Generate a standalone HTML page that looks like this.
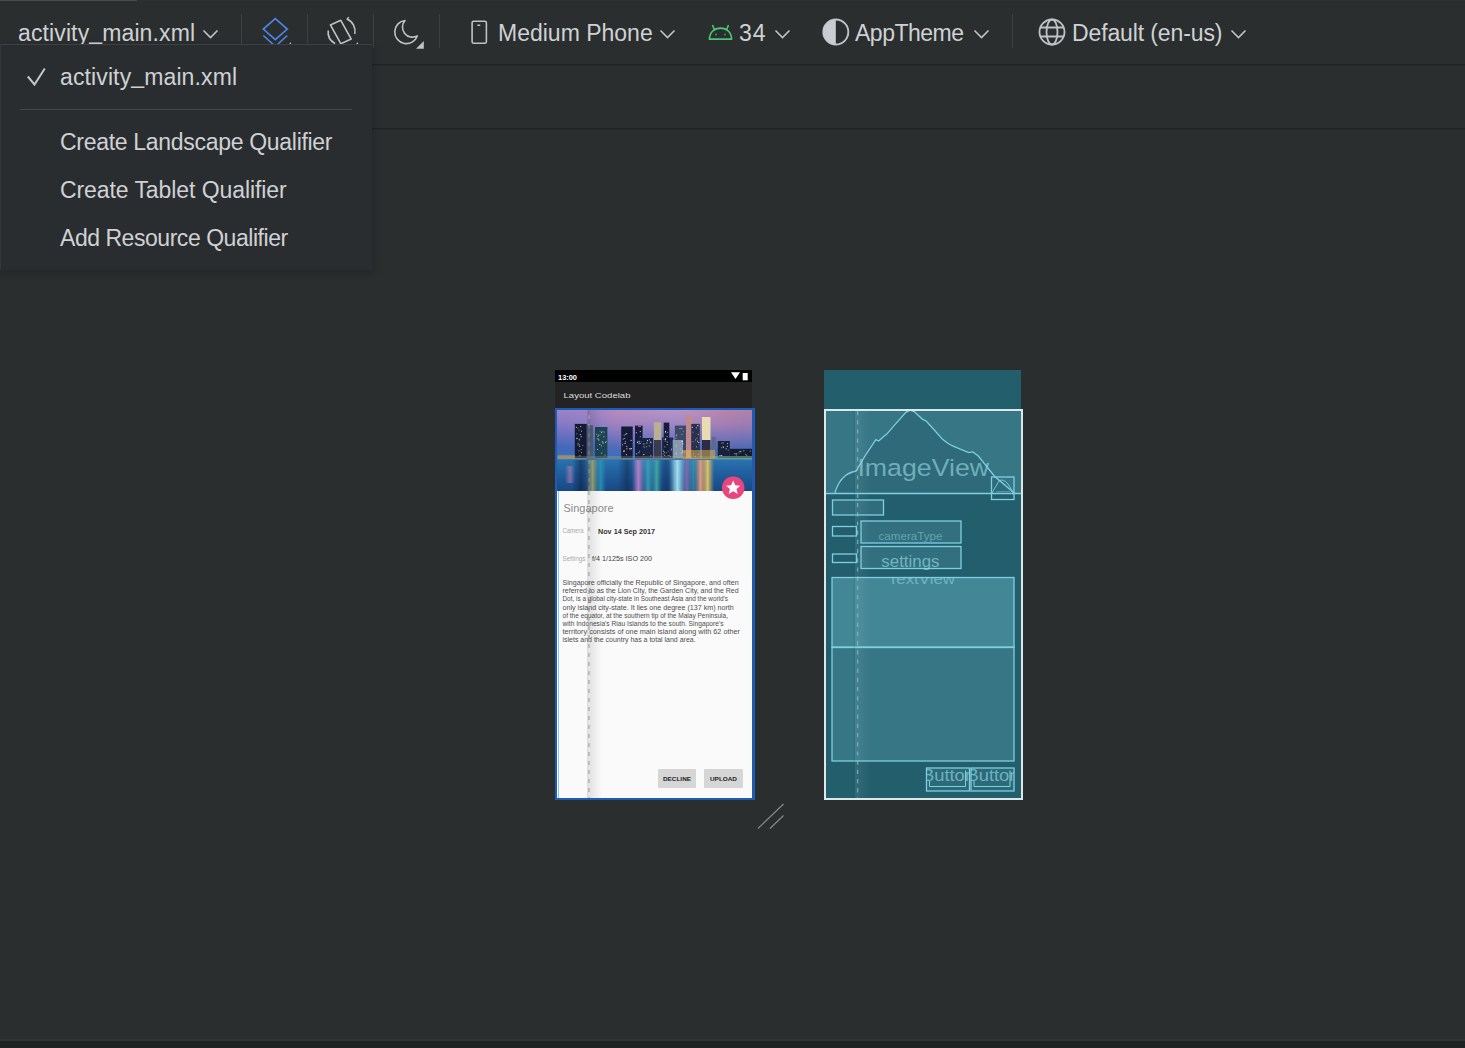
<!DOCTYPE html>
<html><head><meta charset="utf-8">
<style>
html,body{margin:0;padding:0;}
body{width:1465px;height:1048px;overflow:hidden;position:relative;background:#2a2e2f;font-family:"Liberation Sans",sans-serif;}
.a{position:absolute;}
.t{position:absolute;white-space:nowrap;color:#cfd1d4;font-size:23px;line-height:1;}
.sep{position:absolute;top:14px;width:1px;height:34px;background:#3e4144;}
.chev{position:absolute;}
</style></head><body>
<!-- toolbar -->
<div class="a" style="left:0;top:0;width:137px;height:1px;background:#484b4e"></div>
<div class="a" style="left:137px;top:0;width:1328px;height:1px;background:#2d3032"></div>
<div class="a" style="left:0;top:64px;width:1465px;height:1px;background:#1f2323"></div>
<div class="a" style="left:0;top:65px;width:1465px;height:1px;background:#252929"></div>
<div class="a" style="left:0;top:128px;width:1465px;height:1px;background:#1f2323"></div>
<div class="a" style="left:0;top:129px;width:1465px;height:1px;background:#252929"></div>
<div class="a" style="left:0;top:1039px;width:1465px;height:2px;background:#2f3434"></div>
<div class="a" style="left:0;top:1041px;width:1465px;height:7px;background:#1e2222"></div>

<div class="t" id="tb1" style="left:18px;top:22px;letter-spacing:0.12px">activity<span style="position:relative;top:-2px">_</span>main.xml</div>
<svg class="chev" style="left:202px;top:29px" width="17" height="11"><path d="M1.5 1.5 L8.5 8.5 L15.5 1.5" fill="none" stroke="#c0c3c6" stroke-width="1.6"/></svg>
<div class="sep" style="left:241px"></div>
<div class="sep" style="left:307px"></div>
<div class="sep" style="left:373px"></div>
<div class="sep" style="left:439px"></div>
<div class="sep" style="left:1012px"></div>

<!-- layers icon -->
<svg class="a" style="left:258px;top:14px" width="36" height="34">
 <path d="M17.3 4.6 L29.3 15.1 L17.3 25.6 L5.3 15.1 Z" fill="none" stroke="#4f84ec" stroke-width="1.6"/>
 <path d="M5.3 21.5 L17.3 32.3 L29.3 21.5" fill="none" stroke="#4f84ec" stroke-width="1.6"/>
 <path d="M33 28 L33 34 L27 34 Z" fill="#c0c3c6"/>
</svg>
<!-- rotate icon -->
<svg class="a" style="left:323px;top:14px" width="40" height="34">
 <path d="M7.4 10.9 L17.8 6.3 L28.2 25.1 L17.8 29.7 Z" fill="none" stroke="#c0c3c6" stroke-width="1.6" stroke-linejoin="round"/>
 <path d="M5.2 16.5 A13.2 13.2 0 0 0 12 29.5" fill="none" stroke="#c0c3c6" stroke-width="1.6"/>
 <path d="M23.8 5 A13.2 13.2 0 0 1 31.8 20" fill="none" stroke="#c0c3c6" stroke-width="1.6"/>
 <path d="M23.8 5 L26 3.2 M12 29.5 L10.5 31" fill="none" stroke="#c0c3c6" stroke-width="1.4"/>
 <path d="M35 28 L35 34 L29 34 Z" fill="#c0c3c6"/>
</svg>
<!-- moon icon -->
<svg class="a" style="left:390px;top:14px" width="40" height="36">
 <path d="M15 6.5 A11.6 11.6 0 1 0 27.3 21.9 A10 10 0 0 1 15 6.5 Z" fill="none" stroke="#c0c3c6" stroke-width="1.6" stroke-linejoin="round"/>
 <path d="M33.8 27 L33.8 34.8 L26 34.8 Z" fill="#c0c3c6"/>
</svg>
<!-- phone icon -->
<svg class="a" style="left:468px;top:17px" width="24" height="30">
 <rect x="4.1" y="4.3" width="14.3" height="22" rx="1.6" fill="none" stroke="#bfc2c5" stroke-width="1.6"/>
 <rect x="9.2" y="7.4" width="3.2" height="1.5" rx="0.6" fill="#c0c3c6"/>
</svg>
<div class="t" id="tb2" style="left:498px;top:22px;letter-spacing:0px">Medium Phone</div>
<svg class="chev" style="left:659px;top:29px" width="17" height="11"><path d="M1.5 1.5 L8.5 8.5 L15.5 1.5" fill="none" stroke="#c0c3c6" stroke-width="1.6"/></svg>
<!-- android -->
<svg class="a" style="left:705px;top:20px" width="30" height="24">
 <path d="M4.5 19.2 C4.5 12 9.5 8.2 15.5 8.2 C21.5 8.2 26.5 12 26.5 19.2 Z" fill="none" stroke="#4dc673" stroke-width="1.7" stroke-linejoin="round"/>
 <path d="M9.5 10 L7.5 5 M21.5 10 L23.5 5" stroke="#4dc673" stroke-width="1.6"/>
 <circle cx="11" cy="14.5" r="0.9" fill="#4dc673" opacity="0.7"/><circle cx="20" cy="14.5" r="0.9" fill="#4dc673" opacity="0.7"/>
</svg>
<div class="t" id="tb3" style="left:739px;top:22px;letter-spacing:1px">34</div>
<svg class="chev" style="left:774px;top:29px" width="17" height="11"><path d="M1.5 1.5 L8.5 8.5 L15.5 1.5" fill="none" stroke="#c0c3c6" stroke-width="1.6"/></svg>
<!-- half circle -->
<svg class="a" style="left:820px;top:16px" width="32" height="32">
 <circle cx="15.8" cy="16" r="12.5" fill="none" stroke="#c0c3c6" stroke-width="1.9"/>
 <path d="M15.8 3.5 A12.5 12.5 0 0 0 15.8 28.5 Z" fill="#c9ccd0"/>
</svg>
<div class="t" id="tb4" style="left:855px;top:22px;letter-spacing:-0.5px">AppTheme</div>
<svg class="chev" style="left:973px;top:29px" width="17" height="11"><path d="M1.5 1.5 L8.5 8.5 L15.5 1.5" fill="none" stroke="#c0c3c6" stroke-width="1.6"/></svg>
<!-- globe -->
<svg class="a" style="left:1036px;top:16px" width="32" height="32">
 <circle cx="16" cy="16" r="12.5" fill="none" stroke="#c0c3c6" stroke-width="1.8"/>
 <ellipse cx="16" cy="16" rx="5.5" ry="12.5" fill="none" stroke="#c0c3c6" stroke-width="1.8"/>
 <path d="M4 11.5 H28 M4 20.5 H28" stroke="#c0c3c6" stroke-width="1.8"/>
</svg>
<div class="t" id="tb5" style="left:1072px;top:22px;letter-spacing:-0.12px">Default (en-us)</div>
<svg class="chev" style="left:1230px;top:29px" width="17" height="11"><path d="M1.5 1.5 L8.5 8.5 L15.5 1.5" fill="none" stroke="#c0c3c6" stroke-width="1.6"/></svg>

<!-- POPUP -->
<div class="a" style="left:0;top:44px;width:372px;height:226px;background:#2a2d2f;border-top:1px solid #3e4144;border-left:1px solid #34373a;box-sizing:border-box;box-shadow:1px 3px 7px 1px rgba(0,0,0,0.16);">
</div>
<svg class="a" style="left:24px;top:64px" width="26" height="26"><path d="M3.8 12.5 L10.5 20.5 L20.8 4.5" fill="none" stroke="#c4c7ca" stroke-width="2"/></svg>
<div class="t" id="pp1" style="left:60px;top:65.5px;letter-spacing:0.12px">activity<span style="position:relative;top:-1.5px">_</span>main.xml</div>
<div class="a" style="left:20px;top:109px;width:332px;height:1px;background:#45484b"></div>
<div class="t" id="pp2" style="left:60px;top:130.5px;letter-spacing:-0.3px">Create Landscape Qualifier</div>
<div class="t" id="pp3" style="left:60px;top:178.5px;letter-spacing:-0.08px">Create Tablet Qualifier</div>
<div class="t" id="pp4" style="left:60px;top:226.5px;letter-spacing:-0.46px">Add Resource Qualifier</div>

<!-- PHONE -->
<div class="a" style="left:555px;top:370px;width:197px;height:12px;background:#000"></div>
<svg class="a" style="left:555px;top:370px" width="197" height="40">
 <text x="3" y="10.3" font-family="Liberation Sans" font-size="8" font-weight="bold" fill="#fff" textLength="19" lengthAdjust="spacingAndGlyphs">13:00</text>
 <path d="M176 2.2 L185 2.2 L180.5 9 Z" fill="#fff"/>
 <rect x="187.7" y="3" width="5" height="7.3" fill="#fff"/>
 <rect x="0" y="12" width="197" height="26" fill="#232323"/>
 <text x="8.5" y="28.3" font-family="Liberation Sans" font-size="8" fill="#dcdcdc" textLength="67" lengthAdjust="spacingAndGlyphs">Layout Codelab</text>
</svg>
<div class="a" style="left:557px;top:410px;width:195px;height:388px;background:#fafafa"></div>
<svg class="a" style="left:557px;top:410px" width="195" height="81" viewBox="0 0 195 81">
 <defs>
  <linearGradient id="sky" x1="0" y1="0" x2="0" y2="1">
   <stop offset="0" stop-color="#9c84c4"/>
   <stop offset="0.25" stop-color="#8a7cc4"/>
   <stop offset="0.5" stop-color="#6870c0"/>
   <stop offset="0.75" stop-color="#4468b8"/>
   <stop offset="1" stop-color="#3474c0"/>
  </linearGradient>
  <linearGradient id="skyr" x1="0" y1="0" x2="1" y2="0">
   <stop offset="0" stop-color="#8a80d0" stop-opacity="0.0"/>
   <stop offset="0.3" stop-color="#d090b8" stop-opacity="0.5"/>
   <stop offset="0.6" stop-color="#d8a8c8" stop-opacity="0.45"/>
   <stop offset="0.85" stop-color="#c8849c" stop-opacity="0.65"/>
   <stop offset="1" stop-color="#b88098" stop-opacity="0.6"/>
  </linearGradient>
  <linearGradient id="skyv" x1="0" y1="0" x2="0" y2="1">
   <stop offset="0" stop-color="#fff" stop-opacity="1"/>
   <stop offset="0.5" stop-color="#fff" stop-opacity="0.45"/>
   <stop offset="1" stop-color="#fff" stop-opacity="0"/>
  </linearGradient>
  <mask id="mk"><rect width="195" height="48" fill="url(#skyv)"/></mask>
  <linearGradient id="water" x1="0" y1="0" x2="0" y2="1">
   <stop offset="0" stop-color="#2a74b0"/>
   <stop offset="0.5" stop-color="#205c9c"/>
   <stop offset="1" stop-color="#184884"/>
  </linearGradient>
  
  <linearGradient id="rg0" x1="0" y1="0" x2="1" y2="0"><stop offset="0" stop-color="#c080b0" stop-opacity="0"/><stop offset="0.5" stop-color="#c080b0" stop-opacity="0.6"/><stop offset="1" stop-color="#c080b0" stop-opacity="0"/></linearGradient>
  <linearGradient id="rg1" x1="0" y1="0" x2="1" y2="0"><stop offset="0" stop-color="#a8b070" stop-opacity="0"/><stop offset="0.5" stop-color="#a8b070" stop-opacity="0.9"/><stop offset="1" stop-color="#a8b070" stop-opacity="0"/></linearGradient>
  <linearGradient id="rg2" x1="0" y1="0" x2="1" y2="0"><stop offset="0" stop-color="#2a9ab8" stop-opacity="0"/><stop offset="0.5" stop-color="#2a9ab8" stop-opacity="0.8"/><stop offset="1" stop-color="#2a9ab8" stop-opacity="0"/></linearGradient>
  <linearGradient id="rg3" x1="0" y1="0" x2="1" y2="0"><stop offset="0" stop-color="#c080c8" stop-opacity="0"/><stop offset="0.5" stop-color="#c080c8" stop-opacity="0.9"/><stop offset="1" stop-color="#c080c8" stop-opacity="0"/></linearGradient>
  <linearGradient id="rg4" x1="0" y1="0" x2="1" y2="0"><stop offset="0" stop-color="#40a8b8" stop-opacity="0"/><stop offset="0.5" stop-color="#40a8b8" stop-opacity="0.8"/><stop offset="1" stop-color="#40a8b8" stop-opacity="0"/></linearGradient>
  <linearGradient id="rg5" x1="0" y1="0" x2="1" y2="0"><stop offset="0" stop-color="#40a8a0" stop-opacity="0"/><stop offset="0.5" stop-color="#40a8a0" stop-opacity="0.9"/><stop offset="1" stop-color="#40a8a0" stop-opacity="0"/></linearGradient>
  <linearGradient id="rg6" x1="0" y1="0" x2="1" y2="0"><stop offset="0" stop-color="#a0dcec" stop-opacity="0"/><stop offset="0.5" stop-color="#a0dcec" stop-opacity="1.0"/><stop offset="1" stop-color="#a0dcec" stop-opacity="0"/></linearGradient>
  <linearGradient id="rg7" x1="0" y1="0" x2="1" y2="0"><stop offset="0" stop-color="#9070b0" stop-opacity="0"/><stop offset="0.5" stop-color="#9070b0" stop-opacity="0.8"/><stop offset="1" stop-color="#9070b0" stop-opacity="0"/></linearGradient>
  <linearGradient id="rg8" x1="0" y1="0" x2="1" y2="0"><stop offset="0" stop-color="#40a0b0" stop-opacity="0"/><stop offset="0.5" stop-color="#40a0b0" stop-opacity="0.6"/><stop offset="1" stop-color="#40a0b0" stop-opacity="0"/></linearGradient>
  <linearGradient id="rg9" x1="0" y1="0" x2="1" y2="0"><stop offset="0" stop-color="#e89878" stop-opacity="0"/><stop offset="0.5" stop-color="#e89878" stop-opacity="1.0"/><stop offset="1" stop-color="#e89878" stop-opacity="0"/></linearGradient>
  <linearGradient id="rg10" x1="0" y1="0" x2="1" y2="0"><stop offset="0" stop-color="#e0c060" stop-opacity="0"/><stop offset="0.5" stop-color="#e0c060" stop-opacity="1.0"/><stop offset="1" stop-color="#e0c060" stop-opacity="0"/></linearGradient>
  <linearGradient id="rg11" x1="0" y1="0" x2="1" y2="0"><stop offset="0" stop-color="#0c1c3c" stop-opacity="0"/><stop offset="0.5" stop-color="#0c1c3c" stop-opacity="0.55"/><stop offset="1" stop-color="#0c1c3c" stop-opacity="0"/></linearGradient>
  <linearGradient id="rg12" x1="0" y1="0" x2="1" y2="0"><stop offset="0" stop-color="#0c1c3c" stop-opacity="0"/><stop offset="0.5" stop-color="#0c1c3c" stop-opacity="0.45"/><stop offset="1" stop-color="#0c1c3c" stop-opacity="0"/></linearGradient>
  <linearGradient id="rg13" x1="0" y1="0" x2="1" y2="0"><stop offset="0" stop-color="#0e2a50" stop-opacity="0"/><stop offset="0.5" stop-color="#0e2a50" stop-opacity="0.45"/><stop offset="1" stop-color="#0e2a50" stop-opacity="0"/></linearGradient>
  
 </defs>
 <g>
  <rect x="0" y="0" width="195" height="50" fill="url(#sky)"/>
  <rect x="0" y="0" width="195" height="48" fill="url(#skyr)" mask="url(#mk)"/>
  <rect x="0" y="49" width="195" height="32" fill="url(#water)"/>
  <g>
  <rect x="8.0" y="56.0" width="10.0" height="17.0" fill="url(#rg0)"/>
  <rect x="29.0" y="50.0" width="13.0" height="31.0" fill="url(#rg1)"/>
  <rect x="38.0" y="50.0" width="11.0" height="31.0" fill="url(#rg2)"/>
  <rect x="75.0" y="50.0" width="13.0" height="31.0" fill="url(#rg3)"/>
  <rect x="85.0" y="50.0" width="12.0" height="31.0" fill="url(#rg4)"/>
  <rect x="94.0" y="50.0" width="11.0" height="31.0" fill="url(#rg5)"/>
  <rect x="112.0" y="50.0" width="17.0" height="31.0" fill="url(#rg6)"/>
  <rect x="125.0" y="50.0" width="10.0" height="31.0" fill="url(#rg7)"/>
  <rect x="131.0" y="50.0" width="11.0" height="31.0" fill="url(#rg8)"/>
  <rect x="138.0" y="50.0" width="11.0" height="31.0" fill="url(#rg9)"/>
  <rect x="144.0" y="50.0" width="13.0" height="31.0" fill="url(#rg10)"/>
  <rect x="15.0" y="50.0" width="18.0" height="31.0" fill="url(#rg11)"/>
  <rect x="61.0" y="50.0" width="18.0" height="31.0" fill="url(#rg12)"/>
  <rect x="101.0" y="50.0" width="16.0" height="31.0" fill="url(#rg13)"/>
  </g>
  <rect x="17.8" y="13.9" width="12.0" height="34.1" fill="#121a34" />
  <rect x="29.8" y="15.2" width="6.2" height="32.8" fill="#50607a" />
  <rect x="38.0" y="17.0" width="12.4" height="31.0" fill="#1c4456" />
  <rect x="64.2" y="16.5" width="11.5" height="31.5" fill="#141a38" />
  <rect x="78.0" y="15.6" width="7.6" height="32.4" fill="#141e40" />
  <rect x="85.0" y="28.0" width="11.0" height="20.0" fill="#1a2444" />
  <rect x="96.9" y="12.2" width="7.3" height="35.8" fill="#b8b090" />
  <rect x="105.0" y="27.6" width="11.2" height="20.4" fill="#1a2a50" />
  <rect x="106.7" y="12.6" width="5.6" height="35.4" fill="#161c3a" />
  <rect x="117.9" y="15.6" width="11.1" height="32.4" fill="#3a4a68" />
  <rect x="115.7" y="30.0" width="10.3" height="18.0" fill="#8898b0" />
  <rect x="129.0" y="5.3" width="6.9" height="42.7" fill="#c08a90" />
  <rect x="134.2" y="13.9" width="8.6" height="34.1" fill="#2a3050" />
  <rect x="145.0" y="7.0" width="8.5" height="41.0" fill="#e8dcb0" />
  <rect x="154.8" y="26.8" width="4.2" height="21.2" fill="#5a6a90" />
  <rect x="160.8" y="31.0" width="12.0" height="17.0" fill="#182040" />
  <rect x="172.8" y="38.8" width="22.2" height="9.2" fill="#141c34" />
  <rect x="145.0" y="30.0" width="8.5" height="18.0" fill="#2a2c48" />
  <rect x="96.9" y="30.0" width="7.3" height="18.0" fill="#3a3a50" />
  <rect x="21.5" y="19.6" width="1.0" height="1.0" fill="#f4e8b0" opacity="0.54"/>
  <rect x="23.7" y="26.3" width="1.0" height="1.0" fill="#f4e8b0" opacity="0.95"/>
  <rect x="20.4" y="17.6" width="1.0" height="1.0" fill="#f0c080" opacity="0.53"/>
  <rect x="19.2" y="28.1" width="1.0" height="1.0" fill="#a0e0d0" opacity="0.56"/>
  <rect x="20.5" y="34.4" width="1.0" height="1.0" fill="#f4e8b0" opacity="0.79"/>
  <rect x="22.3" y="45.3" width="1.0" height="1.0" fill="#f4e8b0" opacity="0.78"/>
  <rect x="19.6" y="27.9" width="1.0" height="1.0" fill="#a0e0d0" opacity="0.56"/>
  <rect x="21.4" y="40.3" width="1.0" height="1.0" fill="#fff4d0" opacity="0.55"/>
  <rect x="24.0" y="20.7" width="1.0" height="1.0" fill="#f4e8b0" opacity="0.77"/>
  <rect x="18.9" y="16.8" width="1.0" height="1.0" fill="#fff4d0" opacity="0.75"/>
  <rect x="23.6" y="39.1" width="1.0" height="1.0" fill="#f0c080" opacity="0.79"/>
  <rect x="22.8" y="24.2" width="1.0" height="1.0" fill="#fff4d0" opacity="0.85"/>
  <rect x="20.7" y="32.8" width="1.0" height="1.0" fill="#a0e0d0" opacity="0.75"/>
  <rect x="21.7" y="28.9" width="1.0" height="1.0" fill="#a0e0d0" opacity="0.99"/>
  <rect x="19.5" y="27.9" width="1.0" height="1.0" fill="#d0e8f0" opacity="0.58"/>
  <rect x="23.2" y="16.1" width="1.0" height="1.0" fill="#f4e8b0" opacity="0.88"/>
  <rect x="24.0" y="42.1" width="1.0" height="1.0" fill="#d0e8f0" opacity="0.67"/>
  <rect x="21.8" y="30.3" width="1.0" height="1.0" fill="#f0c080" opacity="0.53"/>
  <rect x="19.2" y="23.3" width="1.0" height="1.0" fill="#f4e8b0" opacity="0.53"/>
  <rect x="25.3" y="35.0" width="1.0" height="1.0" fill="#f0c080" opacity="0.64"/>
  <rect x="22.2" y="35.7" width="1.0" height="1.0" fill="#f4e8b0" opacity="0.97"/>
  <rect x="21.9" y="33.9" width="1.0" height="1.0" fill="#f0c080" opacity="0.53"/>
  <rect x="46.5" y="21.6" width="1.0" height="1.0" fill="#fff4d0" opacity="0.70"/>
  <rect x="48.0" y="31.9" width="1.0" height="1.0" fill="#fff4d0" opacity="0.72"/>
  <rect x="44.2" y="42.7" width="1.0" height="1.0" fill="#f0c080" opacity="0.93"/>
  <rect x="41.4" y="29.6" width="1.0" height="1.0" fill="#d0e8f0" opacity="0.84"/>
  <rect x="42.5" y="24.5" width="1.0" height="1.0" fill="#f4e8b0" opacity="0.59"/>
  <rect x="40.9" y="24.5" width="1.0" height="1.0" fill="#f0c080" opacity="0.92"/>
  <rect x="40.4" y="25.9" width="1.0" height="1.0" fill="#fff4d0" opacity="0.71"/>
  <rect x="42.3" y="33.9" width="1.0" height="1.0" fill="#fff4d0" opacity="0.85"/>
  <rect x="43.9" y="35.3" width="1.0" height="1.0" fill="#f4e8b0" opacity="0.73"/>
  <rect x="47.6" y="44.7" width="1.0" height="1.0" fill="#a0e0d0" opacity="0.70"/>
  <rect x="42.6" y="20.9" width="1.0" height="1.0" fill="#f0c080" opacity="0.53"/>
  <rect x="39.2" y="23.8" width="1.0" height="1.0" fill="#fff4d0" opacity="0.55"/>
  <rect x="44.7" y="20.9" width="1.0" height="1.0" fill="#a0e0d0" opacity="0.58"/>
  <rect x="39.6" y="28.2" width="1.0" height="1.0" fill="#f4e8b0" opacity="0.54"/>
  <rect x="40.7" y="28.5" width="1.0" height="1.0" fill="#d0e8f0" opacity="0.98"/>
  <rect x="44.8" y="31.3" width="1.0" height="1.0" fill="#f4e8b0" opacity="0.92"/>
  <rect x="48.8" y="31.0" width="1.0" height="1.0" fill="#f0c080" opacity="0.66"/>
  <rect x="40.0" y="39.0" width="1.0" height="1.0" fill="#d0e8f0" opacity="0.74"/>
  <rect x="45.7" y="32.5" width="1.0" height="1.0" fill="#fff4d0" opacity="0.98"/>
  <rect x="44.0" y="22.1" width="1.0" height="1.0" fill="#a0e0d0" opacity="0.96"/>
  <rect x="46.4" y="26.3" width="1.0" height="1.0" fill="#f4e8b0" opacity="0.85"/>
  <rect x="67.2" y="28.0" width="1.0" height="1.0" fill="#fff4d0" opacity="0.68"/>
  <rect x="66.8" y="32.9" width="1.0" height="1.0" fill="#a0e0d0" opacity="0.66"/>
  <rect x="66.8" y="40.6" width="1.0" height="1.0" fill="#fff4d0" opacity="0.90"/>
  <rect x="72.5" y="38.6" width="1.0" height="1.0" fill="#fff4d0" opacity="0.60"/>
  <rect x="69.4" y="38.3" width="1.0" height="1.0" fill="#f4e8b0" opacity="0.90"/>
  <rect x="69.2" y="23.0" width="1.0" height="1.0" fill="#a0e0d0" opacity="0.98"/>
  <rect x="68.9" y="44.2" width="1.0" height="1.0" fill="#d0e8f0" opacity="0.98"/>
  <rect x="68.2" y="23.8" width="1.0" height="1.0" fill="#fff4d0" opacity="0.74"/>
  <rect x="67.9" y="31.3" width="1.0" height="1.0" fill="#a0e0d0" opacity="0.92"/>
  <rect x="69.3" y="36.1" width="1.0" height="1.0" fill="#f4e8b0" opacity="0.92"/>
  <rect x="65.8" y="28.6" width="1.0" height="1.0" fill="#fff4d0" opacity="0.74"/>
  <rect x="66.4" y="40.0" width="1.0" height="1.0" fill="#d0e8f0" opacity="0.54"/>
  <rect x="73.7" y="38.1" width="1.0" height="1.0" fill="#f0c080" opacity="0.70"/>
  <rect x="73.7" y="38.2" width="1.0" height="1.0" fill="#fff4d0" opacity="1.00"/>
  <rect x="65.0" y="34.3" width="1.0" height="1.0" fill="#f0c080" opacity="0.90"/>
  <rect x="66.1" y="41.1" width="1.0" height="1.0" fill="#f0c080" opacity="0.83"/>
  <rect x="68.0" y="33.1" width="1.0" height="1.0" fill="#fff4d0" opacity="0.51"/>
  <rect x="72.3" y="38.2" width="1.0" height="1.0" fill="#f4e8b0" opacity="0.76"/>
  <rect x="73.6" y="29.9" width="1.0" height="1.0" fill="#fff4d0" opacity="0.91"/>
  <rect x="66.7" y="24.7" width="1.0" height="1.0" fill="#d0e8f0" opacity="0.75"/>
  <rect x="82.8" y="26.2" width="1.0" height="1.0" fill="#a0e0d0" opacity="0.71"/>
  <rect x="79.2" y="43.4" width="1.0" height="1.0" fill="#d0e8f0" opacity="0.95"/>
  <rect x="82.2" y="40.6" width="1.0" height="1.0" fill="#a0e0d0" opacity="0.71"/>
  <rect x="83.6" y="31.3" width="1.0" height="1.0" fill="#a0e0d0" opacity="0.58"/>
  <rect x="81.4" y="42.3" width="1.0" height="1.0" fill="#fff4d0" opacity="0.80"/>
  <rect x="82.8" y="21.0" width="1.0" height="1.0" fill="#fff4d0" opacity="0.74"/>
  <rect x="82.6" y="33.0" width="1.0" height="1.0" fill="#d0e8f0" opacity="0.84"/>
  <rect x="81.5" y="30.8" width="1.0" height="1.0" fill="#f4e8b0" opacity="0.94"/>
  <rect x="78.8" y="22.2" width="1.0" height="1.0" fill="#f4e8b0" opacity="0.89"/>
  <rect x="81.3" y="33.1" width="1.0" height="1.0" fill="#f4e8b0" opacity="0.72"/>
  <rect x="81.9" y="31.5" width="1.0" height="1.0" fill="#a0e0d0" opacity="0.60"/>
  <rect x="80.1" y="31.5" width="1.0" height="1.0" fill="#f0c080" opacity="0.75"/>
  <rect x="79.9" y="32.0" width="1.0" height="1.0" fill="#d0e8f0" opacity="0.96"/>
  <rect x="93.5" y="32.4" width="1.0" height="1.0" fill="#f0c080" opacity="0.57"/>
  <rect x="86.6" y="36.5" width="1.0" height="1.0" fill="#f4e8b0" opacity="0.84"/>
  <rect x="89.4" y="32.6" width="1.0" height="1.0" fill="#d0e8f0" opacity="0.89"/>
  <rect x="93.6" y="31.6" width="1.0" height="1.0" fill="#d0e8f0" opacity="0.57"/>
  <rect x="93.4" y="45.4" width="1.0" height="1.0" fill="#fff4d0" opacity="0.87"/>
  <rect x="86.3" y="44.0" width="1.0" height="1.0" fill="#fff4d0" opacity="0.99"/>
  <rect x="93.0" y="31.7" width="1.0" height="1.0" fill="#f0c080" opacity="1.00"/>
  <rect x="89.1" y="36.2" width="1.0" height="1.0" fill="#d0e8f0" opacity="0.66"/>
  <rect x="92.0" y="29.3" width="1.0" height="1.0" fill="#a0e0d0" opacity="0.73"/>
  <rect x="91.8" y="35.5" width="1.0" height="1.0" fill="#a0e0d0" opacity="0.81"/>
  <rect x="90.1" y="30.1" width="1.0" height="1.0" fill="#fff4d0" opacity="0.99"/>
  <rect x="86.4" y="33.5" width="1.0" height="1.0" fill="#f4e8b0" opacity="0.95"/>
  <rect x="107.2" y="41.8" width="1.0" height="1.0" fill="#f0c080" opacity="0.92"/>
  <rect x="111.7" y="45.1" width="1.0" height="1.0" fill="#f0c080" opacity="0.57"/>
  <rect x="114.0" y="38.5" width="1.0" height="1.0" fill="#d0e8f0" opacity="0.54"/>
  <rect x="106.0" y="40.6" width="1.0" height="1.0" fill="#f0c080" opacity="0.95"/>
  <rect x="108.0" y="28.9" width="1.0" height="1.0" fill="#f4e8b0" opacity="0.90"/>
  <rect x="106.3" y="43.5" width="1.0" height="1.0" fill="#f4e8b0" opacity="0.63"/>
  <rect x="106.6" y="28.8" width="1.0" height="1.0" fill="#a0e0d0" opacity="0.71"/>
  <rect x="113.9" y="39.4" width="1.0" height="1.0" fill="#f4e8b0" opacity="0.76"/>
  <rect x="107.7" y="30.5" width="1.0" height="1.0" fill="#fff4d0" opacity="0.63"/>
  <rect x="107.2" y="44.8" width="1.0" height="1.0" fill="#d0e8f0" opacity="0.77"/>
  <rect x="107.4" y="36.4" width="1.0" height="1.0" fill="#fff4d0" opacity="0.64"/>
  <rect x="112.9" y="45.9" width="1.0" height="1.0" fill="#f4e8b0" opacity="0.51"/>
  <rect x="109.8" y="31.5" width="1.0" height="1.0" fill="#fff4d0" opacity="0.76"/>
  <rect x="108.1" y="28.1" width="1.0" height="1.0" fill="#f0c080" opacity="0.83"/>
  <rect x="109.2" y="42.4" width="1.0" height="1.0" fill="#a0e0d0" opacity="0.65"/>
  <rect x="108.0" y="21.0" width="1.0" height="1.0" fill="#fff4d0" opacity="0.92"/>
  <rect x="109.7" y="34.2" width="1.0" height="1.0" fill="#f0c080" opacity="0.99"/>
  <rect x="110.7" y="40.7" width="1.0" height="1.0" fill="#f4e8b0" opacity="0.54"/>
  <rect x="109.9" y="21.9" width="1.0" height="1.0" fill="#fff4d0" opacity="0.53"/>
  <rect x="109.6" y="25.9" width="1.0" height="1.0" fill="#a0e0d0" opacity="0.84"/>
  <rect x="108.2" y="21.4" width="1.0" height="1.0" fill="#d0e8f0" opacity="0.52"/>
  <rect x="107.9" y="22.3" width="1.0" height="1.0" fill="#f4e8b0" opacity="0.63"/>
  <rect x="110.7" y="45.1" width="1.0" height="1.0" fill="#a0e0d0" opacity="0.66"/>
  <rect x="118.7" y="42.5" width="1.0" height="1.0" fill="#fff4d0" opacity="0.68"/>
  <rect x="118.4" y="27.8" width="1.0" height="1.0" fill="#f0c080" opacity="0.64"/>
  <rect x="124.4" y="23.9" width="1.0" height="1.0" fill="#f4e8b0" opacity="0.55"/>
  <rect x="125.8" y="20.8" width="1.0" height="1.0" fill="#a0e0d0" opacity="0.52"/>
  <rect x="118.6" y="25.5" width="1.0" height="1.0" fill="#fff4d0" opacity="0.54"/>
  <rect x="127.1" y="41.7" width="1.0" height="1.0" fill="#fff4d0" opacity="0.83"/>
  <rect x="124.9" y="42.4" width="1.0" height="1.0" fill="#f0c080" opacity="0.88"/>
  <rect x="125.0" y="31.1" width="1.0" height="1.0" fill="#d0e8f0" opacity="0.86"/>
  <rect x="124.3" y="17.9" width="1.0" height="1.0" fill="#a0e0d0" opacity="0.81"/>
  <rect x="125.1" y="40.5" width="1.0" height="1.0" fill="#fff4d0" opacity="0.95"/>
  <rect x="125.3" y="33.3" width="1.0" height="1.0" fill="#f4e8b0" opacity="0.91"/>
  <rect x="123.7" y="42.8" width="1.0" height="1.0" fill="#fff4d0" opacity="0.54"/>
  <rect x="118.8" y="35.3" width="1.0" height="1.0" fill="#f4e8b0" opacity="0.69"/>
  <rect x="122.5" y="18.1" width="1.0" height="1.0" fill="#f4e8b0" opacity="0.81"/>
  <rect x="124.6" y="31.0" width="1.0" height="1.0" fill="#f4e8b0" opacity="0.73"/>
  <rect x="119.0" y="44.0" width="1.0" height="1.0" fill="#a0e0d0" opacity="0.55"/>
  <rect x="123.2" y="38.5" width="1.0" height="1.0" fill="#f0c080" opacity="0.63"/>
  <rect x="119.1" y="24.4" width="1.0" height="1.0" fill="#fff4d0" opacity="0.62"/>
  <rect x="124.3" y="30.1" width="1.0" height="1.0" fill="#f0c080" opacity="0.54"/>
  <rect x="140.7" y="23.8" width="1.0" height="1.0" fill="#f4e8b0" opacity="0.81"/>
  <rect x="138.9" y="17.3" width="1.0" height="1.0" fill="#fff4d0" opacity="0.67"/>
  <rect x="139.0" y="36.4" width="1.0" height="1.0" fill="#a0e0d0" opacity="0.78"/>
  <rect x="134.8" y="16.8" width="1.0" height="1.0" fill="#d0e8f0" opacity="0.99"/>
  <rect x="135.4" y="21.7" width="1.0" height="1.0" fill="#f0c080" opacity="0.65"/>
  <rect x="138.1" y="29.4" width="1.0" height="1.0" fill="#f0c080" opacity="0.88"/>
  <rect x="141.3" y="32.0" width="1.0" height="1.0" fill="#d0e8f0" opacity="0.99"/>
  <rect x="140.9" y="15.4" width="1.0" height="1.0" fill="#f0c080" opacity="0.54"/>
  <rect x="138.0" y="45.8" width="1.0" height="1.0" fill="#d0e8f0" opacity="0.69"/>
  <rect x="140.7" y="43.8" width="1.0" height="1.0" fill="#f4e8b0" opacity="0.79"/>
  <rect x="135.6" y="31.2" width="1.0" height="1.0" fill="#d0e8f0" opacity="0.57"/>
  <rect x="140.1" y="30.7" width="1.0" height="1.0" fill="#f4e8b0" opacity="0.85"/>
  <rect x="136.2" y="42.8" width="1.0" height="1.0" fill="#f0c080" opacity="0.70"/>
  <rect x="135.7" y="44.4" width="1.0" height="1.0" fill="#f0c080" opacity="0.70"/>
  <rect x="139.5" y="27.8" width="1.0" height="1.0" fill="#f0c080" opacity="0.66"/>
  <rect x="140.2" y="15.0" width="1.0" height="1.0" fill="#d0e8f0" opacity="0.92"/>
  <rect x="162.5" y="45.0" width="1.0" height="1.0" fill="#f4e8b0" opacity="0.95"/>
  <rect x="164.2" y="37.2" width="1.0" height="1.0" fill="#f0c080" opacity="0.70"/>
  <rect x="170.0" y="33.1" width="1.0" height="1.0" fill="#f0c080" opacity="0.88"/>
  <rect x="169.8" y="35.9" width="1.0" height="1.0" fill="#f4e8b0" opacity="0.92"/>
  <rect x="164.2" y="45.1" width="1.0" height="1.0" fill="#fff4d0" opacity="0.99"/>
  <rect x="165.7" y="36.4" width="1.0" height="1.0" fill="#d0e8f0" opacity="0.89"/>
  <rect x="165.6" y="32.4" width="1.0" height="1.0" fill="#f0c080" opacity="0.96"/>
  <rect x="170.7" y="39.7" width="1.0" height="1.0" fill="#f4e8b0" opacity="0.52"/>
  <rect x="168.6" y="38.3" width="1.0" height="1.0" fill="#fff4d0" opacity="0.82"/>
  <rect x="164.2" y="32.7" width="1.0" height="1.0" fill="#a0e0d0" opacity="0.56"/>
  <rect x="166.0" y="36.8" width="1.0" height="1.0" fill="#d0e8f0" opacity="0.63"/>
  <rect x="188.2" y="43.8" width="1.0" height="1.0" fill="#f0c080" opacity="0.83"/>
  <rect x="179.4" y="43.3" width="1.0" height="1.0" fill="#f0c080" opacity="0.56"/>
  <rect x="186.3" y="40.3" width="1.0" height="1.0" fill="#a0e0d0" opacity="0.95"/>
  <rect x="183.3" y="41.2" width="1.0" height="1.0" fill="#d0e8f0" opacity="1.00"/>
  <rect x="182.4" y="40.7" width="1.0" height="1.0" fill="#fff4d0" opacity="0.62"/>
  <rect x="176.8" y="43.2" width="1.0" height="1.0" fill="#d0e8f0" opacity="0.62"/>
  <rect x="178.5" y="43.3" width="1.0" height="1.0" fill="#f4e8b0" opacity="0.87"/>
  <rect x="181.6" y="42.4" width="1.0" height="1.0" fill="#a0e0d0" opacity="0.61"/>
  <rect x="178.8" y="44.5" width="1.0" height="1.0" fill="#f0c080" opacity="0.64"/>
  <rect x="192.8" y="40.6" width="1.0" height="1.0" fill="#a0e0d0" opacity="0.76"/>
  <rect x="189.3" y="45.1" width="1.0" height="1.0" fill="#f4e8b0" opacity="0.64"/>
  <rect x="81.0" y="15.6" width="3.0" height="1.4" fill="#e05070" />
  <rect x="0" y="46" width="195" height="3.5" fill="#e0b050" opacity="0.25"/>
  <rect x="126" y="40" width="32" height="9" fill="#e8b850" opacity="0.5"/>
  <rect x="158" y="46" width="37" height="3.5" fill="#60c0a0" opacity="0.4"/>
  <rect x="1" y="45" width="17" height="4" fill="#e0a040" opacity="0.45"/>
 </g>
</svg>
<svg class="a" style="left:557px;top:410px" width="195" height="388" font-family="Liberation Sans">
 <text x="6.5" y="102.4" font-size="11" fill="#8a8a8a" textLength="50" lengthAdjust="spacingAndGlyphs">Singapore</text>
 <text x="5.5" y="123.4" font-size="6.5" fill="#aaa" textLength="21" lengthAdjust="spacingAndGlyphs">Camera</text>
 <text x="41" y="123.8" font-size="7" font-weight="bold" fill="#333" textLength="57" lengthAdjust="spacingAndGlyphs">Nov 14 Sep 2017</text>
 <text x="5.5" y="151" font-size="6.5" fill="#aaa" textLength="23" lengthAdjust="spacingAndGlyphs">Settings</text>
 <text x="35" y="151" font-size="7" fill="#444" textLength="60" lengthAdjust="spacingAndGlyphs">f/4 1/125s ISO 200</text>
 <g font-size="7" fill="#4e4e4e">
 <text x="5.5" y="175.2" textLength="176.1" lengthAdjust="spacingAndGlyphs">Singapore officially the Republic of Singapore, and often</text>
 <text x="5.5" y="183.3" textLength="176.1" lengthAdjust="spacingAndGlyphs">referred to as the Lion City, the Garden City, and the Red</text>
 <text x="5.5" y="191.4" textLength="165.5" lengthAdjust="spacingAndGlyphs">Dot, is a global city-state in Southeast Asia and the world's</text>
 <text x="5.5" y="199.5" textLength="171.3" lengthAdjust="spacingAndGlyphs">only island city-state. It lies one degree (137 km) north</text>
 <text x="5.5" y="207.6" textLength="165.5" lengthAdjust="spacingAndGlyphs">of the equator, at the southern tip of the Malay Peninsula,</text>
 <text x="5.5" y="215.7" textLength="161.1" lengthAdjust="spacingAndGlyphs">with Indonesia's Riau Islands to the south. Singapore's</text>
 <text x="5.5" y="223.8" textLength="177.5" lengthAdjust="spacingAndGlyphs">territory consists of one main island along with 62 other</text>
 <text x="5.5" y="231.9" textLength="133.1" lengthAdjust="spacingAndGlyphs">islets and the country has a total land area.</text>
 </g>
 <rect x="101" y="359" width="38" height="19" rx="1" fill="#d6d6d6"/>
 <rect x="147" y="359" width="39" height="19" rx="1" fill="#d6d6d6"/>
 <text x="106" y="371.3" font-size="5.5" font-weight="bold" fill="#222" textLength="28" lengthAdjust="spacingAndGlyphs">DECLINE</text>
 <text x="153" y="371.3" font-size="5.5" font-weight="bold" fill="#222" textLength="27" lengthAdjust="spacingAndGlyphs">UPLOAD</text>
</svg>
<!-- guideline band -->
<div class="a" style="left:587px;top:410px;width:15px;height:388px;background:linear-gradient(90deg,rgba(0,0,0,0.12),rgba(0,0,0,0.08) 30%,rgba(0,0,0,0))"></div>
<div class="a" style="left:588px;top:410px;width:2px;height:388px;background:repeating-linear-gradient(180deg,rgba(110,110,110,0.3) 0 4.5px,rgba(255,255,255,0.15) 4.5px 9px)"></div>
<!-- FAB -->
<svg class="a" style="left:721px;top:476px" width="24" height="24">
 <circle cx="12.2" cy="11.8" r="11.3" fill="#e8467c"/>
 <path d="M12.2 4.5 L14.3 9.3 L19.3 9.7 L15.5 13 L16.7 17.9 L12.2 15.3 L7.7 17.9 L8.9 13 L5.1 9.7 L10.1 9.3 Z" fill="#fff"/>
</svg>
<!-- selection -->
<div class="a" style="left:555px;top:408px;width:200px;height:392px;border:2px solid #1f5ab4;border-right-width:3px;box-sizing:border-box"></div>
<div class="a" style="left:557.5px;top:491px;width:1px;height:306.5px;background:#8cc4f4"></div>
<!-- resize handle -->
<svg class="a" style="left:755px;top:800px" width="35" height="35">
 <path d="M3 28.5 L28.5 4 M15 28.5 L28.5 15.5" stroke="#85888b" stroke-width="1.2"/>
</svg>
<!-- BLUEPRINT -->
<div class="a" style="left:824px;top:370px;width:197px;height:428px;background:#235e6c"></div>
<svg class="a" style="left:824px;top:370px" width="200" height="432" viewBox="0 0 200 432" font-family="Liberation Sans">
 <defs>
  <linearGradient id="gband" x1="0" y1="0" x2="1" y2="0">
   <stop offset="0" stop-color="#fff" stop-opacity="0.08"/>
   <stop offset="1" stop-color="#fff" stop-opacity="0"/>
  </linearGradient>
  <clipPath id="cF"><rect x="8" y="207.5" width="182" height="70"/></clipPath>
  <clipPath id="cB1"><rect x="102.5" y="398" width="43" height="23"/></clipPath>
  <clipPath id="cB2"><rect x="147" y="398" width="43" height="23"/></clipPath>
 </defs>
 <rect x="2" y="40" width="195" height="83.5" fill="#367685"/>
 <path d="M10.9 122.8 C13 116 16 110 21 106 C24 103 28 102 32.1 101 L41 86 L51.9 69.6 L54.6 71 L60 66.2 L62.8 64.1 L71 54.6 L81.9 42.3 L86 40.2 L90.1 41.6 L98.3 49.1 L102.4 51.2 L109.2 58.7 L118.8 69.6 C123 73 126 75 129.7 76.4 L144.7 82.6 L148.8 81.9 L154.3 86 L170.7 106.5 L189.8 122.8 Z" fill="#2e6a79"/>
 <g fill="none" stroke="#7fcfe0" stroke-width="1.3">
  <path d="M10.9 122.8 C13 116 16 110 21 106 C24 103 28 102 32.1 101 L41 86 L51.9 69.6 L54.6 71 L60 66.2 L62.8 64.1 L71 54.6 L81.9 42.3 L86 40.2 L90.1 41.6 L98.3 49.1 L102.4 51.2 L109.2 58.7 L118.8 69.6 C123 73 126 75 129.7 76.4 L144.7 82.6 L148.8 81.9 L154.3 86 L170.7 106.5 L189.8 122.8"/>
 </g>
 <rect x="8.5" y="130" width="51" height="15" fill="#2f6d7c"/>
 <rect x="37" y="151" width="100" height="22" fill="#32707f"/>
 <rect x="37" y="176.5" width="100" height="22" fill="#32707f"/>
 <rect x="8" y="207.5" width="182" height="70" fill="#438696"/>
 <rect x="8" y="277" width="182" height="114" fill="#367685"/>
 <rect x="102.5" y="398" width="43" height="23" fill="#2c6a79"/>
 <rect x="147" y="398" width="43" height="23" fill="#2c6a79"/>
 <rect x="31" y="40" width="16" height="388" fill="url(#gband)"/>
 <g fill="none" stroke="#7fcfe0" stroke-width="1.3">
  <line x1="2" y1="123.5" x2="197" y2="123.5" stroke-width="1.5"/>
  <rect x="167.5" y="107" width="22.5" height="22.5"/>
  <path d="M168 123 L175 111 Q179 108 184 114 L189.5 123" stroke-width="0.9"/>
  <path d="M172 121.5 H186" stroke-width="0.7" opacity="0.6"/>
  <rect x="8.5" y="130" width="51" height="15"/>
  <rect x="8.5" y="156.5" width="24" height="9.5"/>
  <rect x="37" y="151" width="100" height="22"/>
  <rect x="8.5" y="184" width="24" height="8.5"/>
  <rect x="37" y="176.5" width="100" height="22"/>
  <rect x="8" y="207.5" width="182" height="70"/>
  <rect x="8" y="277" width="182" height="114"/>
  <rect x="102.5" y="398" width="43" height="23"/>
  <rect x="147" y="398" width="43" height="23"/>
  <path d="M105.5 411 V416.5 H141.5 V400.5 M150 411 V416.5 H186 V400.5" stroke-width="1"/>
 </g>
 <text x="33.4" y="105.8" font-size="24.5" fill="#8fd2de" fill-opacity="0.68" textLength="131.8" lengthAdjust="spacingAndGlyphs">ImageView</text>
 <text x="54.4" y="169.6" font-size="11" fill="#8fd2de" fill-opacity="0.55" textLength="64.2" lengthAdjust="spacingAndGlyphs">cameraType</text>
 <text x="57.3" y="196.6" font-size="16" fill="#8fd2de" fill-opacity="0.7" textLength="58.2" lengthAdjust="spacingAndGlyphs">settings</text>
 <g clip-path="url(#cF)"><text x="63.9" y="214.3" font-size="15.5" fill="#8fd2de" fill-opacity="0.6" textLength="67.1" lengthAdjust="spacingAndGlyphs">TextView</text></g>
 <g clip-path="url(#cB1)"><text x="98" y="410.9" font-size="16" fill="#8fd2de" fill-opacity="0.7" textLength="53" lengthAdjust="spacingAndGlyphs">Button</text></g>
 <g clip-path="url(#cB2)"><text x="142.5" y="410.9" font-size="16" fill="#8fd2de" fill-opacity="0.7" textLength="53" lengthAdjust="spacingAndGlyphs">Button</text></g>
 <line x1="30.3" y1="41" x2="30.3" y2="428" stroke="#1a4e5c" stroke-opacity="0.18" stroke-width="1"/>
 <line x1="33.6" y1="41" x2="33.6" y2="428" stroke="#7fc8d8" stroke-opacity="0.7" stroke-width="1.3" stroke-dasharray="4.2 5"/>
</svg>
<div class="a" style="left:824px;top:409px;width:199px;height:391px;border:2px solid #dce8e8;box-sizing:border-box"></div>
</body></html>
